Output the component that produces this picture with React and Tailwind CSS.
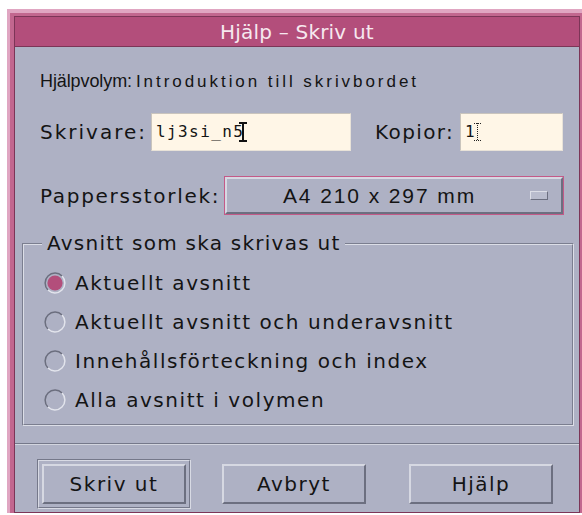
import React from 'react'

// Motif-style print dialog: pink window frame, lavender body, bevelled controls
const ui = "font-['DejaVu_Sans','Liberation_Sans',sans-serif] text-[20px] text-[#141414]"

function Radio({ checked, children }) {
  return (
    <div className="flex h-[39px] items-center">
      <svg width="22" height="22" viewBox="0 0 22 22" className="ml-[20px] shrink-0">
        <path d="M3.93 18.07A10 10 0 0 1 18.07 3.93" fill="none" stroke="#6b6e7e" strokeWidth="1.5" />
        <path d="M18.07 3.93A10 10 0 0 1 3.93 18.07" fill="none" stroke="#e2e4ec" strokeWidth="1.5" />
        {checked && <circle cx="11" cy="11" r="7.6" fill="#b34e7b" />}
      </svg>
      <span className={`ml-[9px] tracking-[1.55px] ${ui}`}>{children}</span>
    </div>
  )
}

function Button({ children }) {
  return (
    <button
      type="button"
      className={`flex h-[40px] w-[144px] shrink-0 items-center justify-center border-2 border-t-[#d6d8e2] border-l-[#d6d8e2] border-b-[#6c6f80] border-r-[#6c6f80] bg-[#aeb1c4] tracking-[1.5px] ${ui}`}
    >
      {children}
    </button>
  )
}

function TextField({ className, children }) {
  return (
    <div className={`flex h-[38px] items-center border border-t-[#c9c4bd] border-l-[#c9c4bd] border-b-[#e8e2d8] border-r-[#e8e2d8] bg-[#fff6e7] pl-[4px] ${className}`}>
      {children}
    </div>
  )
}

export default function App() {
  return (
    <div className="h-[515px] w-[582px] overflow-hidden bg-white">
      {/* window frame */}
      <div className="ml-[7px] mt-[9px] w-[590px] border-l-[3px] border-t-[4px] border-[#e0a6c2] bg-[#c2678f] pl-[4px] pt-[3px]">
        <div className="w-[566px] border border-[#7c3557]">
          <div className="flex h-[30px] items-center justify-center border-b border-[#7c3557] bg-[#b34e7b] font-['DejaVu_Sans',sans-serif] text-[20px] tracking-[0.2px] text-[#f6e8ef]">
            Hjälp – Skriv ut
          </div>

          <div className="flex h-[465px] flex-col bg-[#aeb1c4]">
            <div className="mt-[21px] flex h-[24px] items-baseline pl-[25px] text-[#141414]">
              <span className="font-['Liberation_Sans',sans-serif] text-[18px] tracking-[-0.1px]">Hjälpvolym:</span>
              <span className="ml-[4px] font-['Liberation_Sans',sans-serif] text-[17px] tracking-[2.95px]">Introduktion till skrivbordet</span>
            </div>

            <div className="mt-[21px] flex h-[38px] items-center pl-[25px]">
              <span className={`w-[111px] tracking-[2px] ${ui}`}>Skrivare:</span>
              <TextField className="w-[200px]">
                <span className="font-['DejaVu_Sans_Mono',monospace] text-[16px] tracking-[1.4px] text-[#141414]">lj3si_n5</span>
                <svg width="8" height="20" viewBox="0 0 8 20" className="-ml-[5px]">
                  <path d="M0 1h8M0 19h8M4 1v18" stroke="#111" strokeWidth="2" />
                </svg>
              </TextField>
              <span className={`ml-[24px] w-[85px] tracking-[1.4px] ${ui}`}>Kopior:</span>
              <TextField className="w-[103px]">
                <span className="font-['DejaVu_Sans_Mono',monospace] text-[16px] text-[#141414]">1</span>
                <svg width="7" height="20" viewBox="0 0 7 20" className="-ml-[1px]">
                  <path d="M0 1.5h7M0 18.5h7M3.5 1v18" stroke="#222" strokeWidth="1" strokeDasharray="1 1" />
                </svg>
              </TextField>
            </div>

            <div className="mt-[25px] flex h-[39px] items-center pl-[25px]">
              <span className={`w-[184px] tracking-[1.7px] ${ui}`}>Pappersstorlek:</span>
              <div className="h-[39px] w-[340px] border border-[#c45a88]">
                <div className="flex h-full items-center border-2 border-t-[#d6d8e2] border-l-[#d6d8e2] border-b-[#6c6f80] border-r-[#6c6f80] bg-[#aeb1c4]">
                  <span className="flex-1 pl-[2px] text-center font-['Liberation_Sans',sans-serif] text-[21px] tracking-[1.9px] text-[#141414]">
                    A4 210 x 297 mm
                  </span>
                  <div className="mr-[13px] h-[9px] w-[18px] border border-t-[#dcdee7] border-l-[#dcdee7] border-b-[#6c6f80] border-r-[#6c6f80] bg-[#b9bccd]" />
                </div>
              </div>
            </div>

            {/* etched group box */}
            <div className="relative ml-[7px] mt-[28px] h-[183px] w-[552px] border border-t-[#7b7e8f] border-l-[#7b7e8f] border-b-[#dcdee7] border-r-[#dcdee7]">
              <div className="h-full border border-t-[#dcdee7] border-l-[#dcdee7] border-b-[#7b7e8f] border-r-[#7b7e8f] pt-[18px]">
                <Radio checked>Aktuellt avsnitt</Radio>
                <Radio>Aktuellt avsnitt och underavsnitt</Radio>
                <Radio>Innehållsförteckning och index</Radio>
                <Radio>Alla avsnitt i volymen</Radio>
              </div>
              <span className={`absolute -top-[13px] left-[19px] bg-[#aeb1c4] px-[5px] leading-[24px] tracking-[1.25px] ${ui}`}>
                Avsnitt som ska skrivas ut
              </span>
            </div>

            <div className="mt-[17px] h-px bg-[#75788a]" />
            <div className="h-px bg-[#d3d5df]" />

            <div className="mt-[14px] flex h-[50px] items-center pl-[22px]">
              <div className="flex h-[50px] w-[154px] items-center justify-center border border-t-[#75788a] border-l-[#75788a] border-b-[#d8dae4] border-r-[#d8dae4]">
                <div className="flex h-[48px] w-[152px] items-center justify-center border border-t-[#d8dae4] border-l-[#d8dae4] border-b-[#75788a] border-r-[#75788a]">
                  <Button>Skriv ut</Button>
                </div>
              </div>
              <div className="ml-[31px]">
                <Button>Avbryt</Button>
              </div>
              <div className="ml-[43px]">
                <Button>Hjälp</Button>
              </div>
            </div>
          </div>
        </div>
      </div>
    </div>
  )
}
